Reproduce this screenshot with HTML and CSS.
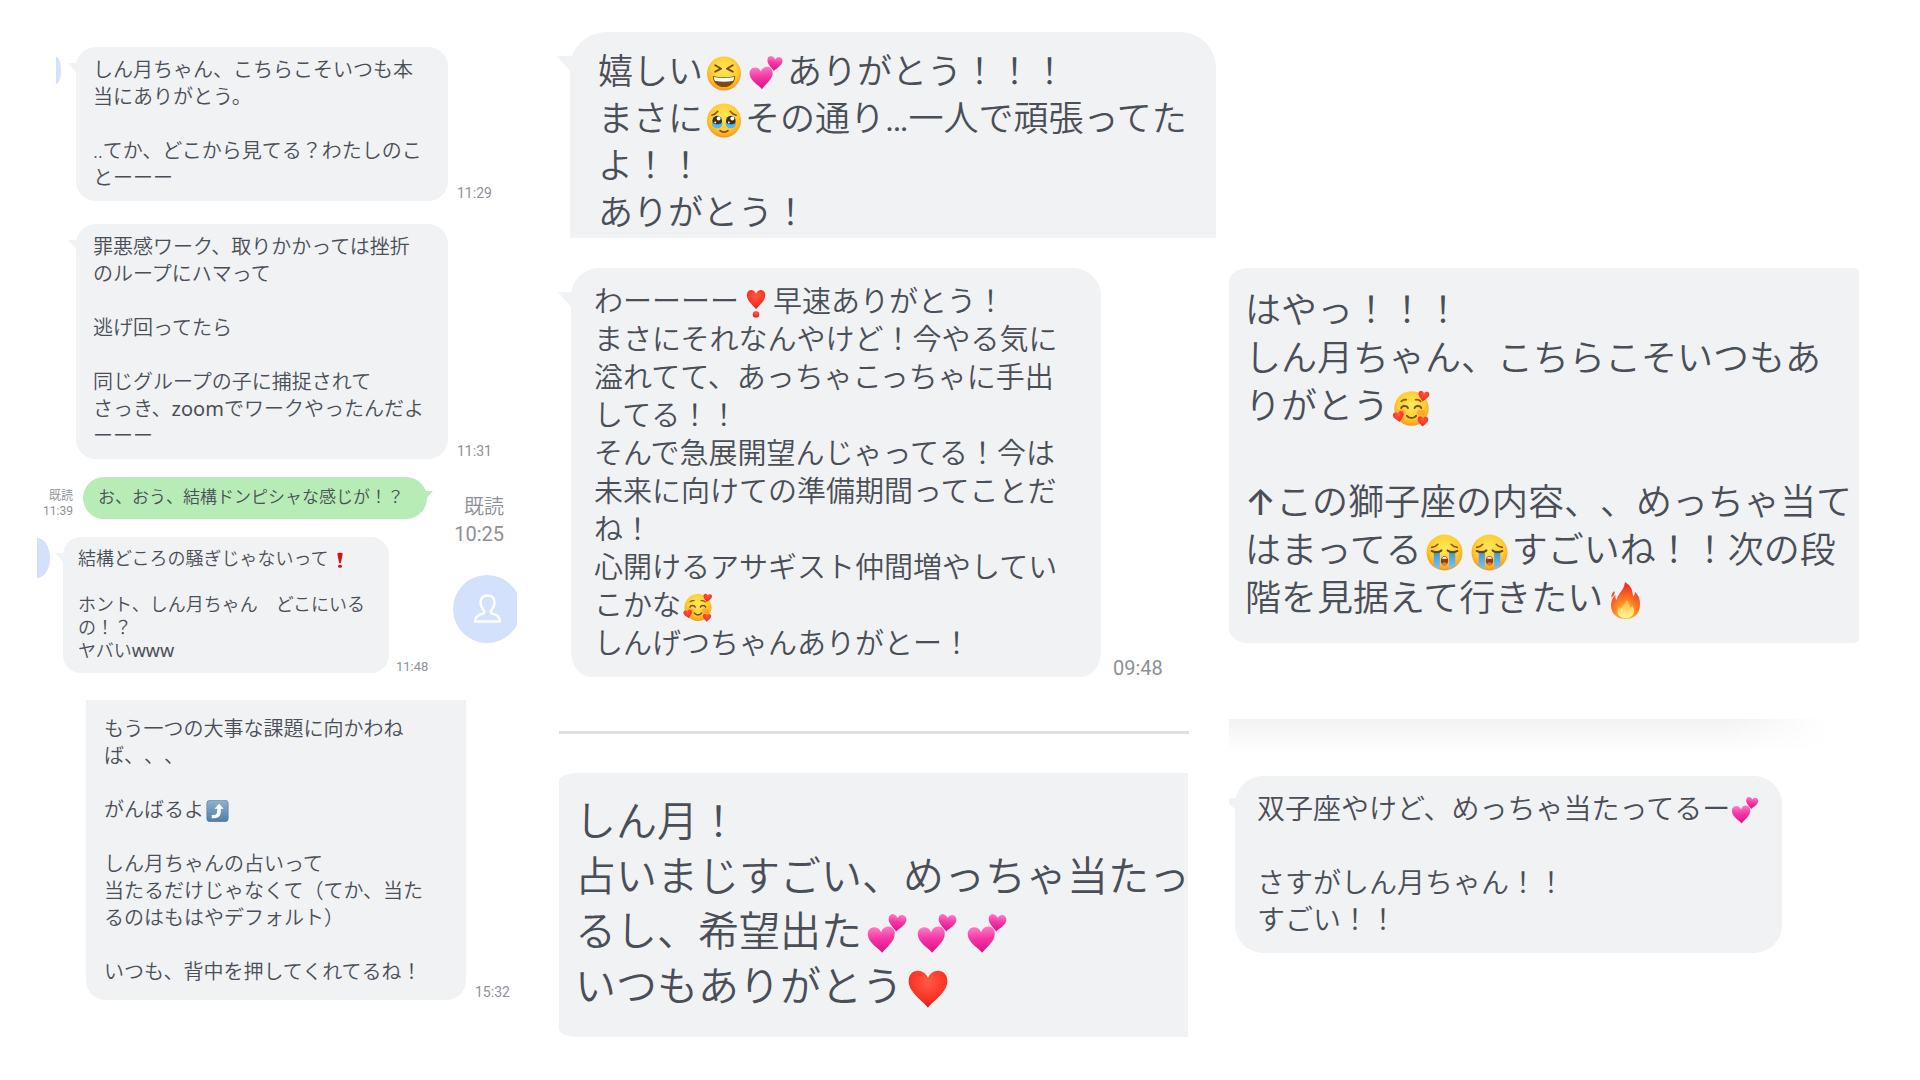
FILE: index.html
```html
<!DOCTYPE html>
<html lang="ja">
<head>
<meta charset="utf-8">
<meta name="viewport" content="width=device-width, initial-scale=1">
<title>しん月ちゃんへのメッセージ</title>
<link rel="stylesheet" href="styles.css">
</head>
<body>
<svg class="sprite" aria-hidden="true">
  <defs>
    <radialGradient id="skin" cx=".5" cy=".38" r=".64">
      <stop offset="0" stop-color="#ffe95a"/><stop offset=".6" stop-color="#ffcf33"/><stop offset=".88" stop-color="#fba71f"/><stop offset="1" stop-color="#ee8a1c"/>
    </radialGradient>
    <linearGradient id="pink" x1="0" y1="0" x2="0" y2="1">
      <stop offset="0" stop-color="#ff7cc4"/><stop offset=".45" stop-color="#f436a6"/><stop offset="1" stop-color="#e00d86"/>
    </linearGradient>
    <radialGradient id="red" cx=".5" cy=".3" r=".75">
      <stop offset="0" stop-color="#ff5a45"/><stop offset=".6" stop-color="#fb3527"/><stop offset="1" stop-color="#d3141a"/>
    </radialGradient>
    <linearGradient id="tears" x1="0" y1="0" x2="0" y2="1">
      <stop offset="0" stop-color="#3f93d8"/><stop offset="1" stop-color="#7cc5f2"/>
    </linearGradient>
    <linearGradient id="key" x1="0" y1="0" x2="0" y2="1">
      <stop offset="0" stop-color="#8fb2cf"/><stop offset="1" stop-color="#507da5"/>
    </linearGradient>
    <radialGradient id="flame" cx=".5" cy=".9" r=".8">
      <stop offset="0" stop-color="#ffd83a"/><stop offset=".4" stop-color="#ff9422"/><stop offset=".75" stop-color="#fb5a26"/><stop offset="1" stop-color="#ee3524"/>
    </radialGradient>
    <linearGradient id="core" x1="0" y1="0" x2="0" y2="1">
      <stop offset="0" stop-color="#ffb52b"/><stop offset="1" stop-color="#fff7a0"/>
    </linearGradient>
    <path id="heart-shape" d="M18 34C15 29 1 21 1 10.500C1 5 4.600 1.500 9.200 1.500C13 1.500 16.500 4 18 8C19.500 4 23 1.500 26.800 1.500C31.400 1.500 35 5 35 10.500C35 21 21 29 18 34Z"/>
  </defs>
  <symbol id="laugh" viewBox="0 0 36 36">
    <circle cx="18" cy="18" r="17.500" fill="url(#skin)"/>
    <path d="M9 9.500l6 3.600-6 3M27 9.500l-6 3.600 6 3" fill="none" stroke="#7a4a10" stroke-width="2" stroke-linecap="round" stroke-linejoin="round"/>
    <path d="M6.500 20.500c7 1.800 16 1.800 23 0 0 6.500-4.800 11.500-11.500 11.500S6.500 27 6.500 20.500z" fill="#7d4a12"/>
    <path d="M7.500 21.500c7 1.500 14 1.500 21 0-.2 2.500-1 4-2 4.300-5.500.8-11.500.8-17 0-1-.3-1.800-1.800-2-4.300z" fill="#fff"/>
  </symbol>
  <symbol id="touched" viewBox="0 0 36 36">
    <circle cx="18" cy="18" r="17.500" fill="url(#skin)"/>
    <path d="M5.500 12.500c2.500-.5 4.500-1.800 6-4M30.500 12.500c-2.500-.5-4.500-1.800-6-4" fill="none" stroke="#8a5312" stroke-width="1.600" stroke-linecap="round"/>
    <ellipse cx="11" cy="18.500" rx="5" ry="5.500" fill="#3b3029"/><ellipse cx="25" cy="18.500" rx="5" ry="5.500" fill="#3b3029"/>
    <path d="M5.500 20c2 2.500 9 2.500 11 0 .3 3.500-2.500 6-5.500 6s-5.500-2-5.500-6zM19.500 20c2 2.500 9 2.500 11 0 0 4-2.500 6-5.500 6s-5.800-2.500-5.500-6z" fill="#55b5ee"/>
    <circle cx="12.500" cy="16" r="2" fill="#fff"/><circle cx="26.500" cy="16" r="2" fill="#fff"/><circle cx="9" cy="20" r="1" fill="#fff"/><circle cx="23" cy="20" r="1" fill="#fff"/>
    <path d="M14 28.500c2 2 6 2 8 0" fill="none" stroke="#7a4a10" stroke-width="1.800" stroke-linecap="round"/>
  </symbol>
  <symbol id="crying" viewBox="0 0 36 36">
    <circle cx="18" cy="18" r="17.500" fill="url(#skin)"/>
    <path d="M5.500 13c2.500-.2 4.500-1.200 6-3M30.500 13c-2.500-.2-4.500-1.200-6-3" fill="none" stroke="#8a5312" stroke-width="1.500" stroke-linecap="round"/>
    <path d="M7.500 16.500h6V34c-2.200-.6-4.200-1.600-6-3zM22.500 16.500h6V31c-1.800 1.400-3.800 2.400-6 3z" fill="url(#tears)"/>
    <path d="M5.500 16.500c2.500 1.600 7 1.600 9.500-.5M30.500 16.500c-2.500 1.600-7 1.600-9.500-.5" fill="none" stroke="#6d4312" stroke-width="2" stroke-linecap="round"/>
    <ellipse cx="18" cy="26" rx="3.600" ry="4.600" fill="#8c3d12"/><path d="M15.500 24c.8-2.500 4.200-2.500 5 0z" fill="#fff"/><ellipse cx="18" cy="29" rx="2.300" ry="1.500" fill="#e8784a"/>
  </symbol>
  <symbol id="adore" viewBox="0 0 36 36">
    <circle cx="18" cy="18" r="16.800" fill="url(#skin)"/>
    <ellipse cx="8.500" cy="22" rx="4" ry="3" fill="#fb7b35" opacity=".45"/><ellipse cx="27" cy="22" rx="4" ry="3" fill="#fb7b35" opacity=".45"/>
    <path d="M8 11c1.500-1.400 3.500-1.800 5-1.500M22 9.500c1.500-.3 3.500.1 5 1.500" fill="none" stroke="#8a5312" stroke-width="1.600" stroke-linecap="round"/>
    <path d="M8 17.500c1-2.600 5.500-2.600 6.500 0M21 17.500c1-2.600 5.500-2.600 6.500 0M13.500 25c2 3 7 3 9 0" fill="none" stroke="#7a4a10" stroke-width="1.900" stroke-linecap="round"/>
    <use href="#heart-shape" fill="url(#red)" transform="translate(25 0) rotate(8) scale(.31)"/>
    <use href="#heart-shape" fill="url(#red)" transform="translate(-1 22) rotate(-12) scale(.31)"/>
    <use href="#heart-shape" fill="url(#red)" transform="translate(24 25) rotate(4) scale(.3)"/>
  </symbol>
  <symbol id="two-hearts" viewBox="0 0 36 36">
    <use href="#heart-shape" fill="url(#pink)" transform="translate(0 11) rotate(-3) scale(.7)"/>
    <use href="#heart-shape" fill="url(#pink)" transform="translate(19.500 -1) rotate(6) scale(.46)"/>
  </symbol>
  <symbol id="red-heart" viewBox="0 0 36 36"><use href="#heart-shape" fill="url(#red)"/></symbol>
  <symbol id="heart-mark" viewBox="0 0 36 36">
    <use href="#heart-shape" fill="url(#red)" transform="translate(6 0) scale(.67 .74)"/>
    <circle cx="18" cy="31.500" r="4" fill="url(#red)"/>
  </symbol>
  <symbol id="bang" viewBox="0 0 36 36">
    <path d="M12 4c0-3 12-3 12 0l-4 20c-.3 2-3.700 2-4 0z" fill="#dc0a12"/><ellipse cx="18" cy="32" rx="4.500" ry="3.500" fill="#dc0a12"/>
  </symbol>
  <symbol id="turn-up" viewBox="0 0 36 36">
    <rect x=".5" y=".5" width="35" height="35" rx="5" fill="url(#key)" stroke="#527b9f"/>
    <path d="M8.500 24.500h3c4 0 6-2 6-5.500v-4.500h-4.500l7.500-8.500 7.500 8.500H23.500V19c0 7-4 11-11 11h-4z" fill="#fff"/>
  </symbol>
  <symbol id="fire" viewBox="0 0 36 36">
    <path d="M17.500 0c8 5 7 10 8 14 1.300-1 1.800-2.600 1.500-4.500 4.500 4 5.500 8.500 5 14C31.500 31 26 36 18 36S4.500 31 4 24c-.4-5 1.500-8.500 4-11.500 0 2.500.5 4 1.700 5C9.500 12 16.500 9 17.500 0z" fill="url(#flame)"/>
    <path d="M7.500 9c-3 1.500-3.500 4-3 6 2-1.200 3.200-3.200 3-6z" fill="#f5502a"/>
    <path d="M19 17c3.500 4 3 6 4 8 .8-.6 1.300-1.500 1.400-2.500C28 27 27 35 18 35c-8 0-9.500-7-6-11.500.2 1.500.6 2.400 1.400 3C14 23 18 22 19 17z" fill="url(#core)"/>
  </symbol>
</svg>

<main class="board">
  <section class="column column-a">
    <article class="row row-first">
      <span class="avatar-edge avatar-edge-small"></span>
      <p class="bubble bubble-narrow tail-left">しん月ちゃん、こちらこそいつも本<br>当にありがとう。<br><br>‥てか、どこから見てる？わたしのこ<br>とーーー</p>
      <time class="time">11:29</time>
    </article>
    <article class="row row-second">
      <p class="bubble bubble-narrow tail-left">罪悪感ワーク、取りかかっては挫折<br>のループにハマって<br><br>逃げ回ってたら<br><br>同じグループの子に捕捉されて<br>さっき、<span class="latin">zoom</span>でワークやったんだよ<br>ーーー</p>
      <time class="time">11:31</time>
    </article>
    <div class="exchange">
      <div class="exchange-main">
        <article class="row row-reply">
          <span class="read">既読<br><time>11:39</time></span>
          <p class="bubble bubble-sent tail-right">お、おう、結構ドンピシャな感じが！？</p>
        </article>
        <article class="row row-small">
          <span class="avatar-edge"></span>
          <p class="bubble bubble-small tail-left">結構どころの騒ぎじゃないって<svg class="emoji" role="img" aria-label="❗"><use href="#bang"/></svg><br><br>ホント、しん月ちゃん　どこにいる<br>の！？<br>ヤバい<span class="latin">www</span></p>
          <time class="time time-small">11:48</time>
        </article>
      </div>
      <aside class="exchange-side">
        <span class="read read-large">既読<br><time>10:25</time></span>
        <span class="avatar"><svg viewBox="0 0 68 68" role="img" aria-label="プロフィール"><circle cx="34" cy="34" r="34" fill="#d4e1fd"/><path d="M22 46.500c0-5 4-7 8-8 1.500-.5 1.500-2 .5-3.500-2-2.500-3-4.500-3-7.500 0-4.500 3-7 7-7s7 2.500 7 7c0 3-1 5-3 7.500-1 1.500-1 3 .5 3.500 4 1 8 3 8 8z" fill="none" stroke="#fff" stroke-width="2.500" stroke-linejoin="round"/></svg></span>
      </aside>
    </div>
    <article class="row row-last">
      <p class="bubble bubble-cut-top">もう一つの大事な課題に向かわね<br>ば、、、<br><br>がんばるよ<svg class="emoji" role="img" aria-label="⤴️"><use href="#turn-up"/></svg><br><br>しん月ちゃんの占いって<br>当たるだけじゃなくて（てか、当た<br>るのはもはやデフォルト）<br><br>いつも、背中を押してくれてるね！</p>
      <time class="time">15:32</time>
    </article>
  </section>

  <section class="column column-b">
    <article class="row row-happy">
      <p class="bubble bubble-happy tail-left tail-large">嬉しい<svg class="emoji" role="img" aria-label="😆"><use href="#laugh"/></svg><svg class="emoji" role="img" aria-label="💕"><use href="#two-hearts"/></svg>ありがとう！！！<br>まさに<svg class="emoji" role="img" aria-label="🥹"><use href="#touched"/></svg>その通り<span class="dots">…</span>一人で頑張ってた<br>よ！！<br>ありがとう！</p>
    </article>
    <article class="row row-quick">
      <p class="bubble bubble-quick tail-left tail-large">わーーーー<svg class="emoji" role="img" aria-label="❣️"><use href="#heart-mark"/></svg>早速ありがとう！<br>まさにそれなんやけど！今やる気に<br>溢れてて、あっちゃこっちゃに手出<br>してる！！<br>そんで急展開望んじゃってる！今は<br>未来に向けての準備期間ってことだ<br>ね！<br>心開けるアサギスト仲間増やしてい<br>こかな<svg class="emoji" role="img" aria-label="🥰"><use href="#adore"/></svg><br>しんげつちゃんありがとー！</p>
      <time class="time time-large">09:48</time>
    </article>
    <hr class="divider">
    <article class="row">
      <p class="bubble bubble-hope">しん月！<br>占いまじすごい、めっちゃ当たっ<br>るし、希望出た<svg class="emoji" role="img" aria-label="💕"><use href="#two-hearts"/></svg><svg class="emoji" role="img" aria-label="💕"><use href="#two-hearts"/></svg><svg class="emoji" role="img" aria-label="💕"><use href="#two-hearts"/></svg><br>いつもありがとう<svg class="emoji" role="img" aria-label="❤️"><use href="#red-heart"/></svg></p>
    </article>
  </section>

  <section class="column column-c">
    <article class="row">
      <p class="bubble bubble-leo">はやっ！！！<br>しん月ちゃん、こちらこそいつもあ<br>りがとう<svg class="emoji" role="img" aria-label="🥰"><use href="#adore"/></svg><br><br><span class="arrow">↑</span>この獅子座の内容、、めっちゃ当て<br>はまってる<svg class="emoji" role="img" aria-label="😭"><use href="#crying"/></svg><svg class="emoji" role="img" aria-label="😭"><use href="#crying"/></svg>すごいね！！次の段<br>階を見据えて行きたい<svg class="emoji" role="img" aria-label="🔥"><use href="#fire"/></svg></p>
    </article>
    <div class="shade"></div>
    <article class="row row-gemini">
      <p class="bubble bubble-gemini tail-left tail-short">双子座やけど、めっちゃ当たってるー<svg class="emoji" role="img" aria-label="💕"><use href="#two-hearts"/></svg><br><br>さすがしん月ちゃん！！<br>すごい！！</p>
    </article>
  </section>
</main>
</body>
</html>
```
FILE: styles.css
```css
:root {
  --bubble: #f1f2f4;
  --sent: #b8ecb6;
  --ink: #4a4e56;
  --muted: #8d9197;
  --avatar: #d4e1fd;
}

* {
  box-sizing: border-box;
}

body {
  margin: 0;
  background: #fff;
  color: var(--ink);
  font-family: "Noto Sans", "Noto Sans CJK JP", sans-serif;
  font-weight: 350;
  text-spacing-trim: space-all;
}

p {
  margin: 0;
}

.sprite {
  position: absolute;
  width: 0;
  height: 0;
}

.board {
  display: grid;
  grid-template-columns: 559fr 670fr 691fr;
  align-items: start;
}

.column {
  display: flex;
  flex-direction: column;
  min-width: 0;
}

.column-a {
  padding-top: 47px;
}

.column-b {
  padding-top: 32px;
}

.column-c {
  padding-top: 268px;
}

.row {
  display: flex;
  align-items: flex-end;
}

/* Speech bubbles */

.bubble {
  position: relative;
  flex: 0 1 auto;
  background: var(--bubble);
  white-space: nowrap;
}

.tail-left::before,
.tail-right::after {
  content: "";
  position: absolute;
  top: 16px;
  left: -8px;
  width: 16px;
  height: 12px;
  background: var(--bubble);
  clip-path: polygon(0 0, 100% 0, 100% 100%, 50% 75%);
}

.tail-right::after {
  top: 14px;
  right: -6px;
  left: auto;
  background: var(--sent);
  clip-path: polygon(100% 0, 0 0, 0 100%, 60% 60%);
}

.tail-large::before {
  top: 24px;
  left: -13px;
  width: 26px;
  height: 20px;
}

.tail-short::before {
  top: 22px;
  left: -6px;
  width: 12px;
  height: 14px;
  clip-path: polygon(0 0, 100% 0, 100% 100%, 50% 80%, 0 40%);
}

.bubble-narrow,
.bubble-cut-top {
  flex-basis: 372px;
  padding: 9px 0 10px 17px;
  border-radius: 20px;
  font-size: 20px;
  line-height: 27px;
}

.bubble-cut-top {
  flex-basis: 380px;
  padding: 15px 0 15px 18px;
  border-radius: 0 0 20px 20px;
}

.bubble-sent {
  flex-basis: 344px;
  padding: 8px 0 10px 15px;
  border-radius: 21px;
  background: var(--sent);
  font-size: 17px;
  line-height: 24px;
}

.bubble-small {
  flex-basis: 326px;
  padding: 10px 0 11px 15px;
  border-radius: 18px;
  font-size: 18px;
  line-height: 23px;
}

.bubble-happy {
  flex-basis: 646px;
  padding: 15px 0 3px 28px;
  border-radius: 36px 36px 0 0;
  font-size: 35px;
  line-height: 47px;
}

.bubble-quick {
  flex-basis: 530px;
  padding: 14px 0 15px 23px;
  border-radius: 28px 28px 20px 20px / 28px 28px 26px 26px;
  font-size: 29px;
  line-height: 38px;
}

.bubble-hope {
  flex-basis: 629px;
  min-width: 0;
  padding: 20px 0 24px 16px;
  overflow: hidden;
  border-radius: 20px 0 0 20px / 8px 0 0 8px;
  font-size: 41px;
  line-height: 55px;
}

.bubble-leo {
  flex-basis: 630px;
  padding: 18px 0 21px 16px;
  border-radius: 20px 6px 6px 20px / 14px 4px 4px 14px;
  font-size: 36px;
  line-height: 48px;
}

.bubble-gemini {
  flex-basis: 547px;
  padding: 14px 0 15px 22px;
  border-radius: 28px;
  font-size: 28px;
  line-height: 37px;
}

/* Emoji: the cell is wider than the drawing, which centres itself */

.emoji {
  width: 42px;
  height: 35px;
  vertical-align: -7px;
}

.bubble-small .emoji {
  width: 22px;
  height: 16px;
  vertical-align: -3px;
}

.bubble-cut-top .emoji {
  width: 27px;
  height: 22px;
  vertical-align: -5px;
}

.bubble-quick .emoji {
  width: 34px;
  height: 29px;
  vertical-align: -6px;
}

.bubble-hope .emoji {
  width: 50px;
  height: 41px;
  vertical-align: -9px;
}

.bubble-leo .emoji {
  width: 45px;
  height: 37px;
  vertical-align: -8px;
}

.bubble-gemini .emoji {
  width: 30px;
  height: 28px;
  vertical-align: -6px;
}

.latin {
  font-weight: 400;
}

.dots {
  font-family: Roboto, sans-serif;
  font-weight: 400;
  line-height: 1;
}

.arrow {
  font-family: Inter, sans-serif;
  font-weight: 500;
  line-height: 1;
}

/* Times and read marks */

.time {
  margin-left: 9px;
  color: var(--muted);
  font-family: Roboto, sans-serif;
  font-size: 14px;
  font-weight: 400;
  line-height: 16px;
}

.time-small {
  margin-left: 7px;
  font-size: 13px;
  line-height: 13px;
}

.time-large {
  margin-left: 12px;
  font-size: 20px;
  line-height: 17px;
}

.read {
  color: var(--muted);
  font-size: 12px;
  line-height: 15px;
  text-align: right;
}

.read time {
  font-family: Roboto, sans-serif;
  font-weight: 400;
}

.read-large {
  font-size: 20px;
  line-height: 27px;
}

/* Avatars */

.avatar-edge {
  align-self: flex-start;
  width: 13px;
  height: 40px;
  margin: 1px 13px 0 0;
  border-radius: 0 13px 13px 0 / 0 20px 20px 0;
  background: var(--avatar);
}

.avatar-edge-small {
  width: 5px;
  height: 27px;
  margin: 10px 15px 0 0;
  border-radius: 0 5px 5px 0 / 0 14px 14px 0;
}

.avatar {
  width: 64px;
  height: 68px;
  overflow: hidden;
}

.avatar svg {
  display: block;
  width: 68px;
  height: 68px;
}

/* First column */

.row-first {
  padding-left: 56px;
}

.row-second {
  margin-top: 23px;
  padding-left: 76px;
}

.exchange {
  display: flex;
  margin-top: 18px;
  padding-left: 37px;
}

.exchange-main {
  display: flex;
  flex: 0 1 416px;
  flex-direction: column;
  gap: 18px;
}

.row-reply {
  gap: 10px;
  padding-left: 6px;
}

.exchange-side {
  display: flex;
  flex-direction: column;
  gap: 27px;
  padding-top: 16px;
}

.exchange-side .read {
  padding-right: 13px;
}

.row-last {
  margin-top: 27px;
  padding-left: 86px;
}

/* Second column */

.row-happy {
  padding-left: 11px;
}

.row-quick {
  margin-top: 30px;
  padding-left: 12px;
}

.divider {
  width: 94%;
  height: 3px;
  margin: 54px 0 39px;
  border: 0;
  background: #dedfe1;
}

/* Third column */

.shade {
  width: 87%;
  height: 34px;
  margin: 76px 0 23px;
  background: linear-gradient(90deg, transparent 82%, #fff), linear-gradient(#f2f2f2, #fff);
}

.row-gemini {
  padding-left: 6px;
}
```
